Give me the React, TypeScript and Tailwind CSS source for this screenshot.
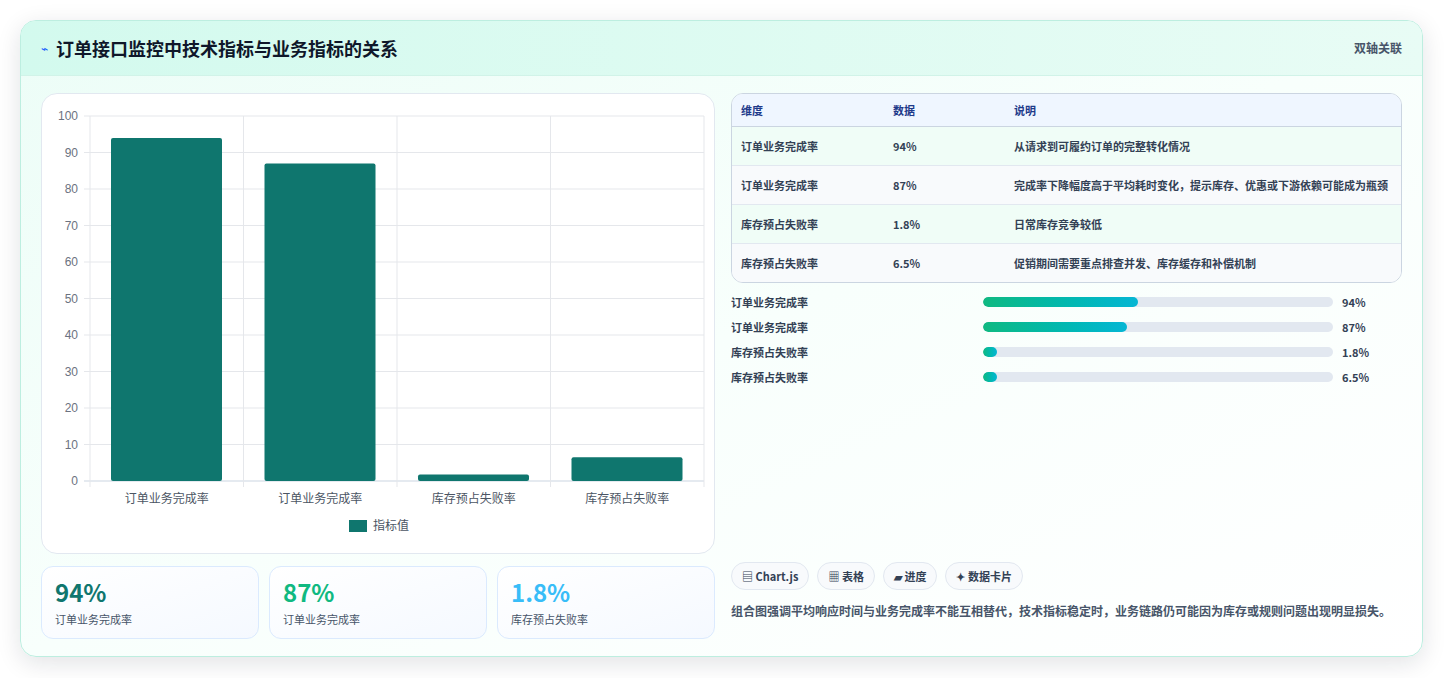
import React from 'react';

const font = { fontFamily: '"Noto Sans CJK SC", "Noto Sans", sans-serif' };

const bars = [
  { label: '订单业务完成率', value: 94 },
  { label: '订单业务完成率', value: 87 },
  { label: '库存预占失败率', value: 1.8 },
  { label: '库存预占失败率', value: 6.5 },
];

const rows = [
  { dim: '订单业务完成率', data: '94%', desc: '从请求到可履约订单的完整转化情况' },
  { dim: '订单业务完成率', data: '87%', desc: '完成率下降幅度高于平均耗时变化，提示库存、优惠或下游依赖可能成为瓶颈' },
  { dim: '库存预占失败率', data: '1.8%', desc: '日常库存竞争较低' },
  { dim: '库存预占失败率', data: '6.5%', desc: '促销期间需要重点排查并发、库存缓存和补偿机制' },
];

const progress = [
  { label: '订单业务完成率', value: '94%', w: 44.3 },
  { label: '订单业务完成率', value: '87%', w: 41 },
  { label: '库存预占失败率', value: '1.8%', w: 4 },
  { label: '库存预占失败率', value: '6.5%', w: 4 },
];

function Chart() {
  const x0 = 48, x1 = 662, y0 = 387, y1 = 22;
  const cw = (x1 - x0) / 4;
  const sy = (v: number) => y0 - ((y0 - y1) * v) / 100;
  return (
    <svg width="674" height="461" viewBox="0 0 674 461" style={font}>
      {[0, 10, 20, 30, 40, 50, 60, 70, 80, 90, 100].map((t) => (
        <g key={t}>
          <line x1={x0 - 6} x2={x1} y1={sy(t)} y2={sy(t)} stroke={t === 0 ? '#cbd5e1' : '#e5e7eb'} />
          <text x={x0 - 12} y={sy(t) + 4} textAnchor="end" fontSize="12" fill="#6b7280" fontFamily="Liberation Sans, sans-serif">{t}</text>
        </g>
      ))}
      {[0, 1, 2, 3, 4].map((i) => (
        <line key={i} x1={x0 + cw * i} x2={x0 + cw * i} y1={y1} y2={y0 + 6} stroke="#e5e7eb" />
      ))}
      {bars.map((b, i) => (
        <g key={i}>
          <rect x={x0 + cw * i + 21} y={sy(b.value)} width={111} height={y0 - sy(b.value)} rx="2" fill="#0f766e" />
          <text x={x0 + cw * i + cw / 2} y={409} textAnchor="middle" fontSize="12" fill="#4b5563">{b.label}</text>
        </g>
      ))}
      <rect x="307" y="426" width="18" height="12" fill="#0f766e" />
      <text x="331" y="436" fontSize="12" fill="#4b5563">指标值</text>
    </svg>
  );
}

export default function App() {
  return (
    <div className="min-h-screen bg-white px-5 pt-5" style={font}>
      <div className="w-[1403px] h-[637px] rounded-2xl border border-[#bdeee0] bg-gradient-to-br from-[#ecfdf7] via-[#f8fffc] to-white shadow-[0_6px_24px_rgba(15,23,42,0.12)] overflow-hidden flex flex-col">
        <div className="h-[55px] shrink-0 flex items-center justify-between px-5 bg-gradient-to-r from-[#d3faee] to-[#e8fcf5] border-b border-[#d1f3e8]">
          <div className="flex items-center gap-2">
            <span className="text-[12px] text-blue-600">⌁</span>
            <h1 className="text-[18px] font-bold text-[#0f172a]">订单接口监控中技术指标与业务指标的关系</h1>
          </div>
          <span className="text-[12px] font-semibold text-[#475569]">双轴关联</span>
        </div>
        <div className="flex gap-4 px-5 pt-[17px]">
          <div className="w-[674px] flex flex-col gap-3">
            <div className="h-[461px] rounded-2xl border border-[#e2e8f0] bg-white overflow-hidden">
              <Chart />
            </div>
            <div className="flex gap-[10px]">
              {[
                { v: '94%', l: '订单业务完成率', c: 'text-[#0f766e]' },
                { v: '87%', l: '订单业务完成率', c: 'text-[#10b981]' },
                { v: '1.8%', l: '库存预占失败率', c: 'text-[#38bdf8]' },
              ].map((s, i) => (
                <div key={i} className="flex-1 h-[73px] rounded-xl border border-[#dbeafe] bg-gradient-to-br from-white to-[#f5f9ff] px-[13px] pt-[10px]">
                  <div className={`text-[24px] font-bold leading-[30px] ${s.c}`}>{s.v}</div>
                  <div className="text-[11px] text-[#475569] mt-[4px]">{s.l}</div>
                </div>
              ))}
            </div>
          </div>
          <div className="w-[675px] flex flex-col">
            <div className="rounded-xl border border-[#cbd5e1] overflow-hidden bg-white">
              <div className="flex h-[33px] items-center bg-[#eff6ff] border-b border-[#cbd5e1] text-[11px] font-semibold text-[#1e3a8a]">
                <div className="w-[161px] pl-[9px]">维度</div>
                <div className="w-[121px]">数据</div>
                <div className="flex-1">说明</div>
              </div>
              {rows.map((r, i) => (
                <div key={i} className={`flex py-[10px] text-[11px] font-semibold text-[#334155] leading-[18px] ${i < 3 ? 'border-b border-[#e2e8f0]' : ''} ${i % 2 === 0 ? 'bg-[#f0fdf7]' : 'bg-[#f8fafc]'}`}>
                  <div className="w-[161px] pl-[9px]">{r.dim}</div>
                  <div className="w-[121px]">{r.data}</div>
                  <div className="flex-1 pr-2">{r.desc}</div>
                </div>
              ))}
            </div>
            <div className="mt-[10px] flex flex-col gap-[7px]">
              {progress.map((p, i) => (
                <div key={i} className="flex items-center h-[18px] text-[11px] font-semibold text-[#334155]">
                  <div className="w-[252px]">{p.label}</div>
                  <div className="w-[350px] h-[10px] rounded-full bg-[#e2e8f0] overflow-hidden">
                    <div className="h-full rounded-full bg-gradient-to-r from-[#10b981] to-[#06b6d4]" style={{ width: `${p.w}%` }} />
                  </div>
                  <div className="ml-[9px]">{p.value}</div>
                </div>
              ))}
            </div>
            <div className="mt-auto flex gap-2">
              {['▤ Chart.js', '▦ 表格', '▰ 进度', '✦ 数据卡片'].map((c) => (
                <span key={c} className="h-[28px] px-[10px] rounded-full border border-[#e2e8f0] bg-[#f8fafc] text-[11px] font-semibold text-[#334155] flex items-center">{c}</span>
              ))}
            </div>
            <p className="mt-[10px] mb-[18px] text-[12px] font-semibold leading-[21px] text-[#475569]">
              组合图强调平均响应时间与业务完成率不能互相替代，技术指标稳定时，业务链路仍可能因为库存或规则问题出现明显损失。
            </p>
          </div>
        </div>
      </div>
    </div>
  );
}
